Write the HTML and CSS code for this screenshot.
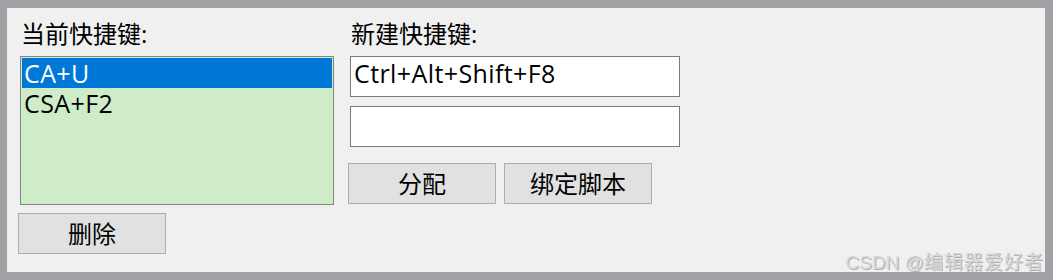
FILE: index.html
```html
<!DOCTYPE html>
<html lang="zh-CN">
<head>
  <meta charset="UTF-8">
  <title>快捷键设置</title>
  <link rel="stylesheet" href="styles.css">
</head>
<body>

  <div class="panel">
    <div class="col-left">
      <div class="label">当前快捷键:</div>
      <ul class="key-list">
        <li class="selected">CA+U</li>
        <li>CSA+F2</li>
      </ul>
      <button class="btn btn-delete">删除</button>
    </div>

    <div class="col-right">
      <div class="label">新建快捷键:</div>
      <input class="key-input" type="text" value="Ctrl+Alt+Shift+F8">
      <input class="key-input second" type="text" value="">
      <div class="btn-row">
        <button class="btn">分配</button>
        <button class="btn">绑定脚本</button>
      </div>
    </div>

    <div class="watermark">CSDN @<span class="wm-cjk">编辑器爱好者</span></div>
  </div>

</body>
</html>
```

FILE: styles.css
```css
html, body {
  margin: 0;
  height: 100%;
}

body {
  box-sizing: border-box;
  background-color: #a1a0a5;
  padding: 8px 8px 8px 7px;
  font-family: 'Open Sans', 'Noto Sans CJK SC', sans-serif;
  font-size: 24px;
  color: #000;
}

.panel {
  position: relative;
  box-sizing: border-box;
  height: 264px;
  background-color: #f0f0f0;
  padding: 11px 0 0 13px;
  display: flex;
  gap: 16px;
}

.label {
  line-height: 30px;
  margin: 0 0 7px 1px;
}

.col-left {
  width: 314px;
  display: flex;
  flex-direction: column;
  align-items: flex-start;
}

.key-list {
  box-sizing: border-box;
  width: 314px;
  height: 149px;
  margin: 0;
  padding: 1px;
  list-style: none;
  background-color: #ceecc8;
  border: 1px solid #858585;
}

.key-list li {
  font-size: 25px;
  line-height: 30px;
  padding-left: 2px;
  letter-spacing: 0.4px;
}

.key-list li.selected {
  background-color: #0078d7;
  color: #fff;
}

.btn {
  box-sizing: border-box;
  width: 148px;
  height: 41px;
  margin: 0;
  padding: 0;
  background-color: #e1e1e1;
  border: 1px solid #adadad;
  font-family: inherit;
  font-size: 24px;
  line-height: 30px;
  color: #000;
}

.btn-delete {
  margin: 8px 0 0 -2px;
}

.col-right {
  display: flex;
  flex-direction: column;
  align-items: flex-start;
}

.key-input {
  box-sizing: border-box;
  width: 330px;
  height: 41px;
  margin: 0;
  padding: 1px 3px 8px;
  background-color: #fff;
  border: 1px solid #7a7a7a;
  font-family: inherit;
  font-size: 25px;
  line-height: 30px;
  letter-spacing: 0.4px;
  color: #000;
  outline: none;
}

.key-input.second {
  margin-top: 9px;
}

.btn-row {
  display: flex;
  gap: 8px;
  margin: 16px 0 0 -2px;
}

.watermark {
  position: absolute;
  right: 2px;
  bottom: -3px;
  font-family: 'Liberation Sans', 'Noto Sans CJK SC', sans-serif;
  font-size: 19px;
  line-height: 24px;
  color: #d6d6d6;
  text-shadow: 1px 1px 0 #b0b0b0;
  white-space: nowrap;
}

.wm-cjk {
  letter-spacing: 1px;
  margin-right: -1px;
}
```
